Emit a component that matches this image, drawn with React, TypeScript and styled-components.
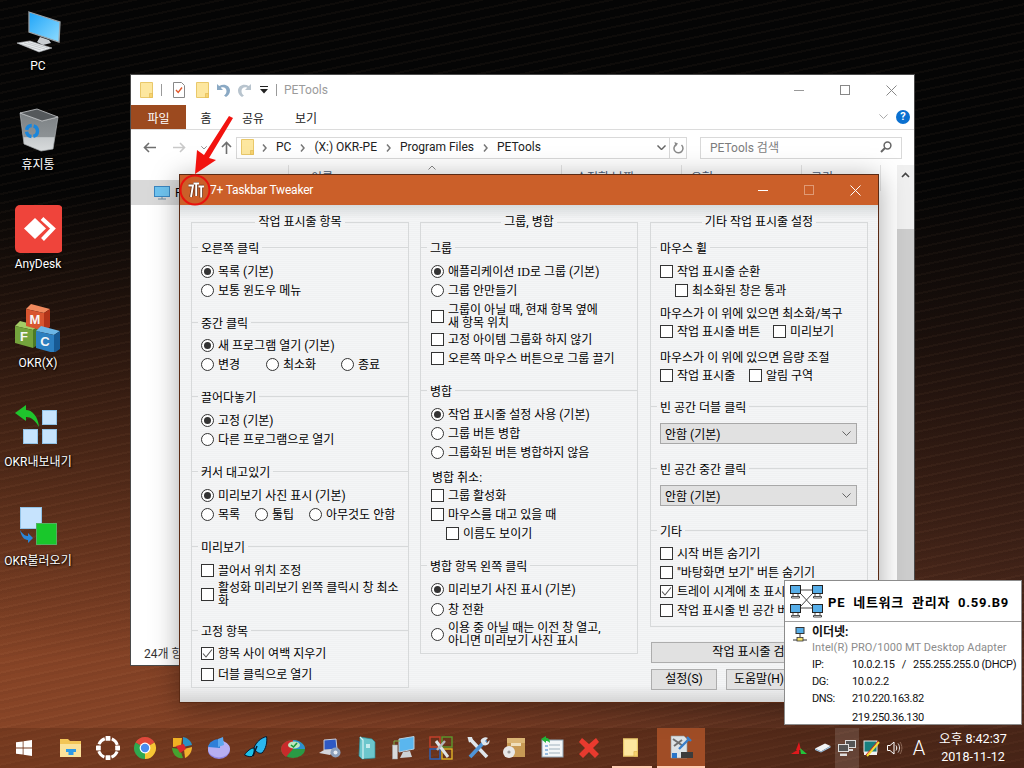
import React from "react";
import styled, { createGlobalStyle } from "styled-components";

const FONT = `Roboto, "Noto Sans CJK KR", sans-serif`;

const Global = createGlobalStyle`
  html, body { margin: 0; padding: 0; width: 1024px; height: 768px; overflow: hidden; background: #050505; }
  #root { width: 1024px; height: 768px; }
  * { box-sizing: border-box; }
`;

/* ---------- desktop ---------- */
const Desktop = styled.div`
  position: relative;
  width: 1024px;
  height: 768px;
  overflow: hidden;
  display: flex;
  flex-direction: column;
  font-family: ${FONT};
  font-size: 12px;
  color: #000;
  background:
    repeating-linear-gradient(168deg, rgba(255, 190, 140, 0.035) 0 2px, rgba(0, 0, 0, 0.03) 2px 5px, transparent 5px 9px),
    linear-gradient(180deg, #050505 0, #050505 190px, rgba(5, 5, 5, 0.75) 330px, rgba(5, 5, 5, 0) 660px),
    linear-gradient(98deg, #8a4627 0, #7b3d24 45%, #5a2f1e 80%, #4d291c 100%);
`;
const IconColumn = styled.div`
  flex: 1;
  display: flex;
  flex-direction: column;
  width: 76px;
  padding-top: 7px;
`;
const DesktopItem = styled.div`
  height: 99px;
  display: flex;
  flex-direction: column;
  align-items: center;
`;
const ItemIcon = styled.svg`
  width: 48px;
  height: 48px;
  flex: none;
`;
const ItemLabel = styled.div`
  margin-top: 3px;
  line-height: 16px;
  color: #fff;
  white-space: nowrap;
  text-shadow: 1px 1px 2px #000, 0 0 2px rgba(0, 0, 0, 0.7);
`;

/* ---------- explorer window ---------- */
const Explorer = styled.div`
  position: absolute;
  left: 130px;
  top: 74px;
  width: 785px;
  height: 592px;
  background: #fff;
  border: 1px solid #4a4a4a;
  display: flex;
  flex-direction: column;
`;
const ExTitle = styled.div`
  height: 30px;
  flex: none;
  display: flex;
  align-items: center;
  padding-left: 9px;
`;
const QuickSlot = styled.span<{ $ml?: number }>`
  display: flex;
  align-items: center;
  margin-left: ${(p) => p.$ml ?? 0}px;
`;
const QuickSep = styled.span<{ $ml: number }>`
  width: 1px;
  height: 12px;
  background: #9a9a9a;
  margin-left: ${(p) => p.$ml}px;
`;
const ExTitleText = styled.span`
  margin-left: 7px;
  color: #9b9b9b;
`;
const WinControls = styled.div`
  margin-left: auto;
  display: flex;
  height: 30px;
`;
const WinButton = styled.span`
  width: 46px;
  display: flex;
  align-items: center;
  justify-content: center;
`;
const Ribbon = styled.div`
  height: 25px;
  flex: none;
  display: flex;
  align-items: stretch;
  border-bottom: 1px solid #dcdcdc;
`;
const FileTab = styled.div`
  width: 55px;
  height: 24px;
  background: #9c4a1f;
  color: #fff;
  display: flex;
  align-items: center;
  justify-content: center;
`;
const RibbonTab = styled.div<{ $w: number }>`
  width: ${(p) => p.$w}px;
  height: 24px;
  display: flex;
  align-items: center;
  justify-content: center;
  color: #222;
`;
const RibbonRight = styled.div`
  margin-left: auto;
  display: flex;
  align-items: center;
  gap: 8px;
  padding-right: 4px;
`;
const HelpBadge = styled.span`
  width: 14px;
  height: 14px;
  border-radius: 50%;
  background: #0a70d0;
  color: #fff;
  font-size: 11px;
  font-weight: 700;
  line-height: 14px;
  text-align: center;
`;
const AddressRow = styled.div`
  height: 35px;
  flex: none;
  display: flex;
  align-items: center;
`;
const NavSlot = styled.span<{ $w: number }>`
  width: ${(p) => p.$w}px;
  display: flex;
  justify-content: center;
`;
const AddressBox = styled.div`
  width: 451px;
  height: 22px;
  border: 1px solid #d9d9d9;
  display: flex;
  align-items: center;
  padding: 0 0 2px 4px;
  color: #222;
`;
const Crumb = styled.span`
  margin-left: 9px;
  white-space: nowrap;
`;
const CrumbArrow = styled.span<{ $first?: boolean }>`
  display: flex;
  padding-top: 2px;
  margin-left: ${(p) => (p.$first ? 8 : 9)}px;
`;
const AddressEnd = styled.div`
  margin-left: auto;
  height: 20px;
  margin-top: 2px;
  display: flex;
  align-items: center;
`;
const RefreshSlot = styled.span`
  margin-left: 3px;
  width: 17px;
  height: 20px;
  border-left: 1px solid #d9d9d9;
  display: flex;
  align-items: center;
  justify-content: center;
`;
const SearchBox = styled.div`
  margin-left: 13px;
  width: 202px;
  height: 22px;
  border: 1px solid #d9d9d9;
  display: flex;
  align-items: center;
  justify-content: space-between;
  padding: 0 9px 2px 9px;
  color: #7d7d7d;
`;
const ExBody = styled.div`
  flex: 1;
  min-height: 0;
  display: flex;
`;
const ExMain = styled.div`
  flex: 1;
  min-width: 0;
  display: flex;
  flex-direction: column;
`;
const ExList = styled.div`
  flex: 1;
  display: flex;
`;
const NavPane = styled.div`
  width: 157px;
  flex: none;
  padding-top: 15px;
`;
const NavRow = styled.div`
  height: 25px;
  background: #d9d9d9;
  display: flex;
  align-items: center;
  padding-left: 23px;
  gap: 5px;
`;
const ColumnHeaders = styled.div`
  flex: 1;
  height: 26px;
  display: flex;
  position: relative;
`;
const ColumnHead = styled.div<{ $w: number; $pl: number }>`
  width: ${(p) => p.$w}px;
  border-left: 1px solid #e5e5e5;
  padding-left: ${(p) => p.$pl}px;
  line-height: 26px;
  color: #4c607a;
  &:last-of-type { border-right: 1px solid #e5e5e5; }
`;
const SortCaret = styled.svg`
  position: absolute;
  left: 140px;
  top: 0;
`;
const StatusBar = styled.div`
  height: 22px;
  flex: none;
  padding-left: 13px;
  line-height: 22px;
  color: #333;
`;
const ScrollBar = styled.div`
  width: 17px;
  flex: none;
  background: #f0f0f0;
  display: flex;
  flex-direction: column;
  margin-right: 0;
`;
const ScrollArrow = styled.div`
  height: 17px;
  display: flex;
  align-items: center;
  justify-content: center;
  margin-bottom: 46px;
  margin-top: 1px;
`;
const ScrollThumb = styled.div`
  flex: 1;
  background: #cdcdcd;
`;

/* ---------- tweaker window ---------- */
const Tweaker = styled.div`
  position: absolute;
  left: 179px;
  top: 174px;
  width: 700px;
  height: 529px;
  border: 1px solid #5a2a14;
  box-shadow: 0 4px 26px rgba(0, 0, 0, 0.35);
  display: flex;
  flex-direction: column;
`;
const TwTitle = styled.div`
  height: 30px;
  flex: none;
  background: #cb5f29;
  color: #fff;
  display: flex;
  align-items: center;
  padding-left: 8px;
`;
const TwTitleText = styled.span`
  margin-left: 6px;
  letter-spacing: -0.2px;
`;
const DimSquare = styled.span`
  width: 10px;
  height: 10px;
  border: 1px solid #e09a75;
`;
const TwBody = styled.div`
  flex: 1;
  display: flex;
  gap: 11px;
  padding: 9px 0 0 11px;
  background:
    linear-gradient(180deg, rgba(200, 205, 207, 0.65) 0, rgba(240, 240, 240, 0) 14px, rgba(240, 240, 240, 0) 480px, rgba(205, 205, 205, 0.8) 100%),
    repeating-linear-gradient(0deg, #f0f1f2 0 1px, #f4f5f6 1px 2px);
`;
const Column = styled.div<{ $ml?: number }>`
  width: 218px;
  flex: none;
  margin-left: ${(p) => p.$ml ?? 0}px;
  display: flex;
  flex-direction: column;
`;
const Panel = styled.fieldset<{ $pad: number; $pb: number }>`
  --pad: ${(p) => p.$pad}px;
  margin: 0;
  padding: 0 0 ${(p) => p.$pb}px;
  min-width: 0;
  width: 218px;
  border: 1px solid #d7d9da;
`;
const PanelTitle = styled.legend`
  margin: 0 auto;
  padding: 0 3px;
  height: 16px;
  line-height: 16px;
  white-space: nowrap;
`;
const GroupHead = styled.div<{ $mt?: number }>`
  height: 16px;
  margin-top: ${(p) => p.$mt ?? 14}px;
  display: flex;
  align-items: center;
  gap: 3px;
  white-space: nowrap;
  &::before { content: ""; width: 6px; height: 1px; background: #d7d9da; }
  &::after { content: ""; flex: 1; height: 1px; background: #d7d9da; }
`;
const Row = styled.div<{ $h?: number; $mt?: number; $ml?: number }>`
  height: ${(p) => p.$h ?? 19}px;
  margin-top: ${(p) => p.$mt ?? 0}px;
  margin-left: calc(var(--pad) + ${(p) => p.$ml ?? 0}px);
  display: flex;
  align-items: center;
  white-space: nowrap;
`;
const Option = styled.span<{ $w?: number }>`
  display: flex;
  align-items: center;
  gap: 4px;
  ${(p) => (p.$w ? `width: ${p.$w}px;` : "")}
  line-height: 13px;
`;
const OptionText = styled.span`
  padding-top: 2px;
`;
const RadioMark = styled.span<{ $on?: boolean }>`
  width: 13px;
  height: 13px;
  flex: none;
  border-radius: 50%;
  border: 1px solid #333;
  background: #fff;
  display: flex;
  align-items: center;
  justify-content: center;
  &::after {
    content: "";
    width: 7px;
    height: 7px;
    border-radius: 50%;
    background: ${(p) => (p.$on ? "#333" : "transparent")};
  }
`;
const CheckMark = styled.span`
  width: 13px;
  height: 13px;
  flex: none;
  border: 1px solid #333;
  background: #fff;
  display: flex;
  align-items: center;
  justify-content: center;
`;
const SerifBit = styled.span`
  font-family: "Liberation Serif", serif;
  font-size: 12px;
`;
const SelectBox = styled.div<{ $mt?: number }>`
  width: 197px;
  height: 21px;
  margin-top: ${(p) => p.$mt ?? 9}px;
  margin-left: var(--pad);
  background: #e1e1e1;
  border: 1px solid #a8a8a8;
  display: flex;
  align-items: center;
  justify-content: space-between;
  padding: 0 5px 0 4px;
`;
const WideButton = styled.div`
  margin: 15px 0 0 1px;
  width: 217px;
  height: 21px;
  background: #e1e1e1;
  border: 1px solid #adadad;
  line-height: 19px;
  text-align: center;
`;
const ButtonRow = styled.div`
  margin: 6px 0 0 1px;
  display: flex;
  gap: 9px;
`;
const SmallButton = styled.div`
  width: 66px;
  height: 21px;
  background: #e1e1e1;
  border: 1px solid #adadad;
  line-height: 19px;
  text-align: center;
`;

/* ---------- tooltip ---------- */
const Tip = styled.div`
  position: absolute;
  left: 784px;
  top: 580px;
  width: 238px;
  height: 145px;
  background: #fff;
  border: 1px solid #8c8c8c;
`;
const TipHead = styled.div`
  height: 41px;
  border-bottom: 1px solid #a0a0a0;
  display: flex;
  align-items: center;
  padding-left: 5px;
  gap: 5px;
`;
const TipTitle = styled.div`
  font-size: 13px;
  font-weight: 700;
  letter-spacing: 0.75px;
  word-spacing: 4px;
  white-space: nowrap;
`;
const TipBody = styled.div`
  display: flex;
  gap: 5px;
  padding: 3px 0 0 8px;
`;
const TipIconSlot = styled.span`
  flex: none;
  display: flex;
  padding-top: 2px;
`;
const TipLine = styled.div<{ $muted?: boolean; $bold?: boolean }>`
  line-height: 15px;
  white-space: pre;
  font-size: ${(p) => (p.$bold ? 12 : 11)}px;
  letter-spacing: ${(p) => (p.$bold ? 0 : 0.08)}px;
  color: ${(p) => (p.$muted ? "#8c8c8c" : "#111")};
  font-weight: ${(p) => (p.$bold ? 700 : 400)};
`;
const TipGrid = styled.div`
  margin-top: 1px;
  display: grid;
  grid-template-columns: 40px auto;
  grid-auto-rows: 17px;
  align-items: center;
  color: #111;
  font-size: 11px;
  letter-spacing: -0.35px;
  white-space: pre;
`;
const TipLast = styled.div`
  margin: 3px 0 0 40px;
  line-height: 15px;
  font-size: 11px;
  letter-spacing: -0.35px;
  color: #111;
`;

/* ---------- taskbar ---------- */
const Taskbar = styled.div`
  height: 40px;
  flex: none;
  display: flex;
  align-items: stretch;
  background: rgba(50, 20, 6, 0.2);
`;
const StartSlot = styled.div`
  width: 52px;
  padding-left: 16px;
  display: flex;
  align-items: center;
`;
const PinSlot = styled.div`
  width: 37px;
  display: flex;
  align-items: center;
  justify-content: center;
`;
const RunSlot = styled.div<{ $w: number; $on?: boolean; $pr?: number }>`
  width: ${(p) => p.$w}px;
  margin-left: 5px;
  padding-right: ${(p) => p.$pr ?? 0}px;
  display: flex;
  align-items: center;
  justify-content: center;
  background: ${(p) => (p.$on ? "#a04d26" : "transparent")};
  border-bottom: 2px solid #ffcdb4;
`;
const Tray = styled.div`
  margin-left: auto;
  display: flex;
  align-items: stretch;
  padding-right: 16px;
`;
const TraySlot = styled.div<{ $hover?: boolean }>`
  width: 24px;
  display: flex;
  align-items: center;
  justify-content: center;
  color: #fff;
  background: ${(p) => (p.$hover ? "rgba(255,255,255,.13)" : "transparent")};
`;
const TrayLetter = styled.span`
  font-size: 20px;
  font-weight: 300;
  color: #fff;
`;
const Clock = styled.div`
  width: 77px;
  padding-left: 7px;
  display: flex;
  flex-direction: column;
  justify-content: center;
  align-items: center;
  color: #fff;
  font-size: 12.6px;
  line-height: 18px;
  white-space: nowrap;
`;

/* ---------- annotation ---------- */
const Annotation = styled.svg`
  position: absolute;
  left: 170px;
  top: 105px;
  overflow: visible;
  pointer-events: none;
`;

/* ---------- small glyph helpers ---------- */
const Radio = ({ on, w, children }: { on?: boolean; w?: number; children: React.ReactNode }) => (
  <Option $w={w}>
    <RadioMark $on={on} />
    <OptionText>{children}</OptionText>
  </Option>
);
const Check = ({ on, w, children }: { on?: boolean; w?: number; children: React.ReactNode }) => (
  <Option $w={w}>
    <CheckMark>
      {on && (
        <svg width="11" height="11" viewBox="0 0 11 11">
          <path d="M1 5.5 L4 9 L10 1.5" fill="none" stroke="#555" strokeWidth="1.1" />
        </svg>
      )}
    </CheckMark>
    <OptionText>{children}</OptionText>
  </Option>
);
const Chevron = ({ color = "#666", w = 10, sw = 1 }: { color?: string; w?: number; sw?: number }) => (
  <svg width={w} height={w * 0.6} viewBox="0 0 10 6">
    <path d="M0.5 0.5 L5 5 L9.5 0.5" fill="none" stroke={color} strokeWidth={sw} />
  </svg>
);
const CrumbChevron = () => (
  <svg width="5" height="8" viewBox="0 0 5 8">
    <path d="M1 0.5 L4 4 L1 7.5" fill="none" stroke="#777" strokeWidth="1.5" />
  </svg>
);
const PaleFolder = ({ w = 13, h = 16 }: { w?: number; h?: number }) => (
  <svg width={w} height={h} viewBox="0 0 13 16">
    <path d="M0.5 0.5 H12.5 V15.5 H0.5 Z" fill="#fde79f" stroke="#e9c86a" />
    <path d="M9.5 11.5 H12.5 V15.5 H9.5 Z" fill="#f7d36f" stroke="#e2bb55" strokeWidth="0.7" />
  </svg>
);

/* ---------- desktop icons ---------- */
const IconPC = () => (
  <ItemIcon viewBox="0 0 48 48">
    <defs>
      <linearGradient id="pcs" x1="0" y1="0" x2="1" y2="1">
        <stop offset="0" stopColor="#1fa4f8" />
        <stop offset="1" stopColor="#8fdcff" />
      </linearGradient>
    </defs>
    <path d="M15 5 L46 15 L45 35 L15 25 Z" fill="url(#pcs)" stroke="#9aa2a8" strokeWidth="1.3" />
    <path d="M26 30 L35 33 L37 36 L29 38 L23 35 Z" fill="#c8ccd0" />
    <path d="M3 36 L16 34 L38 41 L25 45 Z" fill="#e9ecee" stroke="#b0b4b8" strokeWidth="0.6" />
    <path d="M6 37 L27 43 M10 36 L31 42 M14 35.5 L34 41" stroke="#a4a8ac" strokeWidth="0.5" />
  </ItemIcon>
);
const IconBin = () => (
  <ItemIcon viewBox="0 0 48 48">
    <defs>
      <linearGradient id="bin" x1="0" y1="0" x2="0" y2="1">
        <stop offset="0" stopColor="#7c8184" />
        <stop offset="0.62" stopColor="#8d9295" />
        <stop offset="0.65" stopColor="#c6cacc" />
        <stop offset="1" stopColor="#d8dbdc" />
      </linearGradient>
    </defs>
    <path d="M6 7 L28 15 L44 11 L39 43 L27 45 L10 38 Z" fill="url(#bin)" stroke="#aeb2b4" strokeWidth="0.7" />
    <path d="M6 7 L23 3 L44 11 L28 15 Z" fill="#54585b" stroke="#c6c9cb" strokeWidth="0.8" />
    <circle cx="18" cy="25" r="5.5" fill="none" stroke="#1a86dc" strokeWidth="3.4" strokeDasharray="7 2" />
  </ItemIcon>
);
const IconAny = () => (
  <ItemIcon viewBox="0 0 48 48">
    <rect x="1" y="0" width="48" height="48" rx="5" fill="#ef443b" />
    <path d="M21 13 L32 23.5 L21 34 L10 23.5 Z" fill="#fff" />
    <path d="M28 13.5 L39 23.5 L28.5 34.5" fill="none" stroke="#fff" strokeWidth="4" />
  </ItemIcon>
);
const Cube = ({ x, y, front, top, side, t }: { x: number; y: number; front: string; top: string; side: string; t: string }) => (
  <g transform={`translate(${x} ${y})`}>
    <path d="M5 0 L24 5 L18 9 L0 5 Z" fill={top} />
    <path d="M0 5 L18 9 L18 27 L0 22 Z" fill={front} />
    <path d="M18 9 L24 5 L24 23 L18 27 Z" fill={side} />
    <text x="9" y="20" textAnchor="middle" fontFamily="Liberation Sans" fontWeight="700" fontSize="13" fill="#f6f6f6">{t}</text>
  </g>
);
const IconMFC = () => (
  <ItemIcon viewBox="0 0 48 48">
    <Cube x={1} y={17} front="#74a33c" top="#a4cc66" side="#4c7a26" t="F" />
    <Cube x={12} y={0} front="#d8552f" top="#f18a5e" side="#b23418" t="M" />
    <Cube x={22} y={22} front="#2c7fc0" top="#6cb6e6" side="#175a94" t="C" />
  </ItemIcon>
);
const IconExport = () => (
  <ItemIcon viewBox="0 0 48 48">
    <g fill="#c6e3fd" stroke="#92c2e6">
      <rect x="28.5" y="7.5" width="14" height="14" />
      <rect x="9.5" y="26.5" width="14" height="14" />
      <rect x="28.5" y="26.5" width="14" height="14" />
    </g>
    <path d="M1 10 L12 2 L12 7 C18 7 24 13 25 24 C21 17 17 14 12 14 L12 18 Z" fill="#1fc42c" />
  </ItemIcon>
);
const IconImport = () => (
  <ItemIcon viewBox="0 0 48 48">
    <rect x="6.5" y="5.5" width="21" height="21" fill="#c6e3fd" stroke="#92c2e6" />
    <rect x="22.5" y="21.5" width="20" height="21" fill="#19c72b" stroke="#53b060" />
    <path d="M6 28 C9 33 12 34 14 34 L14 31 L19 36 L14 41 L14 38 C10 38 7 34 6 28 Z" fill="#2a86d8" />
  </ItemIcon>
);

/* ---------- taskbar icons ---------- */
const Tb = ({ children, s = 24 }: { children: React.ReactNode; s?: number }) => (
  <svg width={s} height={s} viewBox="0 0 24 24">{children}</svg>
);
const BarFolder = () => (
  <Tb>
    <path d="M1 3 H9 L11 5 H22 V21 H1 Z" fill="#f3c557" />
    <path d="M1 8 H22 V21 H1 Z" fill="#fbe29a" />
    <path d="M7 13 H17 V16 H14.5 V19 H9.5 V16 H7 Z" fill="#2e9ae6" />
  </Tb>
);
const BarRing = () => (
  <Tb>
    <circle cx="12" cy="12" r="9.8" fill="none" stroke="#fff" strokeWidth="3" strokeDasharray="8.2 7.2" strokeDashoffset="-3.6" />
    {[0, 90, 180, 270].map((a) => (
      <rect key={a} x="9.6" y="0" width="4.8" height="4.8" rx="0.6" fill="#fff" transform={`rotate(${a} 12 12)`} />
    ))}
  </Tb>
);
const BarChrome = () => (
  <Tb>
    <path d="M12 12 L2.47 6.5 A11 11 0 0 1 21.53 6.5 Z" fill="#e0483b" />
    <path d="M12 12 L21.53 6.5 A11 11 0 0 1 12 23 Z" fill="#f7c634" />
    <path d="M12 12 L12 23 A11 11 0 0 1 2.47 6.5 Z" fill="#2fa84f" />
    <circle cx="12" cy="12" r="5.4" fill="#fff" />
    <circle cx="12" cy="12" r="4.2" fill="#4a8cf0" />
  </Tb>
);
const BarPie = () => (
  <Tb>
    <path d="M3 2 H12 L11 10 L3 11 Z" fill="#f0b023" />
    <path d="M13 1 C18 2 21 5 22 9 L13 11 Z" fill="#2a8fc4" />
    <path d="M2 12 L10 13 L13 22 C7 23 3 19 2 12 Z" fill="#46a32f" />
    <path d="M14 13 L22 11 C22 16 19 20 15 22 Z" fill="#f2b32d" />
    <path d="M6 10 L14 8 L16 13 L10 17 Z" fill="#d9262d" />
  </Tb>
);
const BarDisc = () => (
  <Tb>
    <ellipse cx="12" cy="14" rx="11" ry="9" fill="#8f86e6" />
    <ellipse cx="12" cy="13" rx="11" ry="8.5" fill="#b6aff2" />
    <path d="M1 11 C2 6 7 3 13 3 L13 12 Z" fill="#2f7fd8" />
    <path d="M11 3 L16 1 L17 9 L11 11 Z" fill="#5aa7ee" />
  </Tb>
);
const BarFly = () => (
  <Tb>
    <path d="M10 12 C12 6 17 2 22.5 0.5 C23.5 6 22 13 18 17 C15 18 12 16 10 12 Z" fill="#2ab6ee" stroke="#06182c" strokeWidth="1" />
    <path d="M0.5 19 C3 15 7 12 10 12 C10.5 15 10 18 8 20.5 C5 21 2.5 20 0.5 19 Z" fill="#1cc2ea" stroke="#06182c" strokeWidth="1" />
    <path d="M9 20 L13 10" stroke="#06182c" strokeWidth="1.4" />
  </Tb>
);
const BarPart = () => (
  <Tb>
    <ellipse cx="12" cy="13" rx="12" ry="9" fill="#2a9a45" />
    <path d="M0 13 C0 8 5 4 12 4 L12 13 L5 21 C2 19 0 16 0 13 Z" fill="#c72b2b" />
    <path d="M12 4 C18 4 24 8 24 13 L12 13 Z" fill="#2d8fd0" />
    <ellipse cx="13" cy="9" rx="6" ry="3.6" fill="#bfe6bf" />
    <path d="M10 9 L12.5 11 L16 7" fill="none" stroke="#1a9a3a" strokeWidth="1.6" />
  </Tb>
);
const BarGear = () => (
  <Tb>
    <path d="M6 4 L18 3 L19 13 L6 14 Z" fill="#2e59c4" stroke="#c8ccd8" />
    <path d="M1 17 L6 14 L17 14 L12 19 Z" fill="#d4d6dc" />
    <circle cx="17.5" cy="16.5" r="5" fill="#8da0bc" />
    <circle cx="17.5" cy="16.5" r="2" fill="#e8edf4" />
  </Tb>
);
const BarDoc = () => (
  <Tb>
    <path d="M5 1 L17 3 L20 6 L20 22 L7 23 L4 20 Z" fill="#6cc6cc" stroke="#2e8f9a" strokeWidth="0.7" />
    <path d="M5 1 L8 4 L8 23" fill="none" stroke="#d4f1f2" strokeWidth="1.2" />
    <path d="M11 8 L15 8 L15 12 L11 12 Z" fill="#c4ecee" />
  </Tb>
);
const BarDesk = () => (
  <Tb>
    <rect x="0.5" y="9" width="5" height="14" fill="#d8dadc" stroke="#9fa3a6" strokeWidth="0.5" />
    <path d="M7 3 L22 0.5 L22 13 L7 16 Z" fill="#5ab6ee" stroke="#b8d0e0" />
    <path d="M11 16 L18 15 L20 21 L8 22 Z" fill="#cfd3d6" />
    <path d="M2 9 L2 5 L8 5" stroke="#7ab04e" strokeWidth="1" fill="none" />
  </Tb>
);
const BarGrid = () => (
  <Tb>
    <rect x="1" y="1" width="10" height="10" fill="none" stroke="#c8402c" strokeWidth="1.4" />
    <rect x="13" y="1" width="10" height="10" fill="none" stroke="#5f9a2e" strokeWidth="1.4" />
    <rect x="1" y="13" width="10" height="10" fill="none" stroke="#2a66c4" strokeWidth="1.4" />
    <rect x="13" y="13" width="10" height="10" fill="none" stroke="#e0b428" strokeWidth="1.4" />
    <path d="M7 5 L19 21" stroke="#dfe2e6" strokeWidth="3" />
    <path d="M16 5 L8 14" stroke="#b4b8bc" strokeWidth="2.4" />
  </Tb>
);
const BarTools = () => (
  <Tb>
    <path d="M4 3 L21 21" stroke="#dfe6ec" strokeWidth="3.6" />
    <path d="M20 4 L4 21" stroke="#4f94d6" strokeWidth="3.8" />
    <path d="M14.5 5 C15.5 1.5 20 0.5 22 2 L19 5 L21 7 L23.5 4 C24 8 20.5 10.5 17 9 Z" fill="#dfe6ec" />
    <path d="M1.5 1 L6 1 L7 5 L3 6.5 Z" fill="#dfe6ec" />
  </Tb>
);
const BarBox = () => (
  <Tb>
    <path d="M4 5 H22 V21 H4 Z" fill="#c89a55" />
    <path d="M4 2 H22 L22 7 H4 Z" fill="#dcb676" />
    <path d="M8 7 H18 V10 H8 Z" fill="#f0dfbc" />
    <circle cx="6" cy="16" r="6" fill="#e8e8e8" />
    <circle cx="6" cy="16" r="1.6" fill="#9a9a9a" />
  </Tb>
);
const BarList = () => (
  <Tb>
    <rect x="2" y="4" width="21" height="17" fill="#f3f6f8" stroke="#8fa4b4" />
    <path d="M9 9 H20 M9 13 H20 M9 17 H20" stroke="#9fb0bc" />
    <path d="M5 10 H8 M5 14 H8 M5 18 H8" stroke="#3a80c8" />
    <path d="M1 3 L6 0 L6 2 C9 2 10 4 10 7 C8 5 7 5 6 5 L6 7 Z" fill="#21b53a" />
  </Tb>
);
const BarX = () => (
  <Tb>
    <path d="M5 2 L12 8 L19 2 L22 6 L16 12 L22 18 L18 22 L12 16 L6 22 L2 18 L8 12 L2 6 Z" fill="#e83a2e" />
  </Tb>
);
const BarApp = () => (
  <Tb>
    <path d="M2 1 H15 L18 4 V23 H2 Z" fill="#dde3e6" stroke="#8f979c" strokeWidth="0.6" />
    <path d="M4 4 L14 11 M5 11 L13 5" stroke="#6f6f6f" strokeWidth="2" />
    <path d="M10 14 L20 4 M18 2 L22 6" stroke="#3a7fc8" strokeWidth="2.4" />
    <rect x="12" y="17" width="12" height="6" fill="#3c3c3c" />
    <rect x="3" y="18" width="5" height="5" fill="#2a76c8" />
  </Tb>
);

const Tri = () => (
  <svg width="16" height="14" viewBox="0 0 16 14">
    <path d="M0 13 L8 8 L8 13 Z" fill="#e0181c" />
    <path d="M8 1 L5 9 L10 9 Z" fill="#e0181c" />
    <path d="M9 7 L16 13 L10 13 Z" fill="#22c43a" />
  </svg>
);
const Drive = () => (
  <svg width="16" height="10" viewBox="0 0 16 10">
    <path d="M0 5.5 L10 0.5 L15.5 3 L6 8.5 Z" fill="#f2f4f6" />
    <path d="M0 5.5 L6 8.5 L15.5 3 L15.5 4.5 L6 9.5 L0 7 Z" fill="#9ec6e6" />
  </svg>
);
const NetTray = () => (
  <svg width="18" height="17" viewBox="0 0 18 17">
    <rect x="7.5" y="0.5" width="10" height="7" fill="#555" stroke="#ddd" />
    <rect x="0.5" y="4.5" width="10" height="7" fill="#555" stroke="#ddd" />
    <path d="M2 13.5 H9 V16 H2 Z" fill="#ddd" />
    <path d="M10 9 H15 V11 H10 Z" fill="#ddd" />
  </svg>
);
const MonitorTray = () => (
  <svg width="17" height="17" viewBox="0 0 17 17">
    <rect x="1" y="1" width="13" height="11" fill="#187f7f" stroke="#e8e8e8" />
    <rect x="1" y="12" width="13" height="3" fill="#f2f2f2" />
    <path d="M16 2 L4 16" stroke="#f5dc32" strokeWidth="2" />
    <path d="M15 1 L3 15" stroke="#d9261c" strokeWidth="1" />
  </svg>
);
const SpeakerTray = () => (
  <svg width="16" height="14" viewBox="0 0 16 14">
    <path d="M0.5 4.5 H3 L7 1 V13 L3 9.5 H0.5 Z" fill="none" stroke="#fff" />
    <path d="M9 4.5 C10 6 10 8 9 9.5" fill="none" stroke="#fff" />
    <path d="M11 2.5 C13 5 13 9 11 11.5" fill="none" stroke="#ddd" />
    <path d="M13 1 C15.5 4.5 15.5 9.5 13 13" fill="none" stroke="#8d6a58" />
  </svg>
);

/* ---------- tooltip icons ---------- */
const NetMon = ({ x, y }: { x: number; y: number }) => (
  <g transform={`translate(${x} ${y})`}>
    <rect x="0.5" y="0.5" width="10" height="8" fill="#57aee8" stroke="#222" />
    <path d="M3 8.5 V11 M8 8.5 V11 M1.5 11.5 H9.5 V13 H1.5 Z" fill="#fff" stroke="#222" strokeWidth="0.8" />
  </g>
);
const NetBig = () => (
  <svg width="33" height="33" viewBox="0 0 33 33">
    <path d="M11 5 H22 M11 23 H22 M11 9 L22 21 M22 9 L11 21" stroke="#333" strokeWidth="0.9" />
    <NetMon x={0} y={0} />
    <NetMon x={22} y={0} />
    <NetMon x={0} y={19} />
    <NetMon x={22} y={19} />
  </svg>
);
const NetSmall = () => (
  <svg width="14" height="15" viewBox="0 0 14 15">
    <rect x="3" y="0.5" width="8" height="6" fill="#57aee8" stroke="#333" />
    <path d="M7 6.5 V10 M0 13 H14" stroke="#333" />
    <rect x="4" y="10.5" width="6" height="3.5" fill="#f5e06a" stroke="#333" strokeWidth="0.8" />
  </svg>
);
const TweakLogo = () => (
  <svg width="16" height="16" viewBox="0 0 16 16">
    <g fill="none" stroke="#6a3014" strokeWidth="3.4">
      <path d="M0.5 3.5 H5 L3 15" />
      <path d="M5.5 1.5 H11 M8.2 1.5 V14" />
      <path d="M10.5 4.5 H16 M13.2 4.5 V15.5" />
    </g>
    <g fill="none" stroke="#fff" strokeWidth="1.9">
      <path d="M0.5 3.5 H5 L3 15" />
      <path d="M5.5 1.5 H11 M8.2 1.5 V14" />
      <path d="M10.5 4.5 H16 M13.2 4.5 V15.5" />
    </g>
  </svg>
);

export default function App() {
  return (
    <>
      <Global />
      <Desktop>
        <IconColumn>
          <DesktopItem><IconPC /><ItemLabel>PC</ItemLabel></DesktopItem>
          <DesktopItem><IconBin /><ItemLabel>휴지통</ItemLabel></DesktopItem>
          <DesktopItem><IconAny /><ItemLabel>AnyDesk</ItemLabel></DesktopItem>
          <DesktopItem><IconMFC /><ItemLabel>OKR(X)</ItemLabel></DesktopItem>
          <DesktopItem><IconExport /><ItemLabel>OKR내보내기</ItemLabel></DesktopItem>
          <DesktopItem><IconImport /><ItemLabel>OKR불러오기</ItemLabel></DesktopItem>
        </IconColumn>

        <Explorer>
          <ExTitle>
            <QuickSlot><PaleFolder /></QuickSlot>
            <QuickSep $ml={8} />
            <QuickSlot $ml={11}>
              <svg width="12" height="16" viewBox="0 0 12 16">
                <path d="M0.5 0.5 H8.5 L11.5 3.5 V15.5 H0.5 Z" fill="#fff" stroke="#888" />
                <path d="M3 8 L5.2 10.5 L9 5.5" fill="none" stroke="#e2592b" strokeWidth="1.4" />
              </svg>
            </QuickSlot>
            <QuickSlot $ml={11}><PaleFolder /></QuickSlot>
            <QuickSlot $ml={7}>
              <svg width="14" height="14" viewBox="0 0 14 14">
                <path d="M1 1 V7 H7 L4.8 4.8 C7.5 3.5 10.5 5 10.5 8 C10.5 10 9.5 11.5 8 12.5 L10 14 C12.5 12.5 14 10.5 14 7.5 C14 2.5 8 0 3.2 3 Z" fill="#8aa9c4" />
              </svg>
            </QuickSlot>
            <QuickSlot $ml={8}>
              <svg width="14" height="14" viewBox="0 0 14 14">
                <path d="M13 1 V7 H7 L9.2 4.8 C6.5 3.5 3.5 5 3.5 8 C3.5 10 4.5 11.5 6 12.5 L4 14 C1.5 12.5 0 10.5 0 7.5 C0 2.5 6 0 10.8 3 Z" fill="#b8c4ce" />
              </svg>
            </QuickSlot>
            <QuickSlot $ml={8}>
              <svg width="9" height="8" viewBox="0 0 9 8">
                <path d="M0 0 H8 V1 H0 Z M0 3 H8 L4 7.5 Z" fill="#222" />
              </svg>
            </QuickSlot>
            <QuickSep $ml={7} />
            <ExTitleText>PETools</ExTitleText>
            <WinControls>
              <WinButton>
                <svg width="10" height="10" viewBox="0 0 10 10"><path d="M0 5.5 H10" stroke="#999" /></svg>
              </WinButton>
              <WinButton>
                <svg width="10" height="10" viewBox="0 0 10 10"><rect x="0.5" y="0.5" width="9" height="9" fill="none" stroke="#888" /></svg>
              </WinButton>
              <WinButton>
                <svg width="11" height="11" viewBox="0 0 11 11"><path d="M0.5 0.5 L10.5 10.5 M10.5 0.5 L0.5 10.5" stroke="#888" /></svg>
              </WinButton>
            </WinControls>
          </ExTitle>
          <Ribbon>
            <FileTab>파일</FileTab>
            <RibbonTab $w={40}>홈</RibbonTab>
            <RibbonTab $w={54}>공유</RibbonTab>
            <RibbonTab $w={52}>보기</RibbonTab>
            <RibbonRight>
              <Chevron color="#a0a0a0" w={9} />
              <HelpBadge>?</HelpBadge>
            </RibbonRight>
          </Ribbon>
          <AddressRow>
            <NavSlot $w={36}>
              <svg width="13" height="11" viewBox="0 0 13 11"><path d="M13 5.5 H2 M6 1 L1.5 5.5 L6 10" fill="none" stroke="#6f6f6f" strokeWidth="1.6" /></svg>
            </NavSlot>
            <NavSlot $w={24}>
              <svg width="13" height="11" viewBox="0 0 13 11"><path d="M0 5.5 H11 M7 1 L11.5 5.5 L7 10" fill="none" stroke="#c9c9c9" strokeWidth="1.6" /></svg>
            </NavSlot>
            <NavSlot $w={26}><Chevron color="#888" w={6} sw={1.5} /></NavSlot>
            <NavSlot $w={19}>
              <svg width="11" height="13" viewBox="0 0 11 13"><path d="M5.5 13 V2 M1 6 L5.5 1.5 L10 6" fill="none" stroke="#6f6f6f" strokeWidth="1.6" /></svg>
            </NavSlot>
            <AddressBox>
              <PaleFolder />
              <CrumbArrow $first><CrumbChevron /></CrumbArrow>
              <Crumb>PC</Crumb>
              <CrumbArrow><CrumbChevron /></CrumbArrow>
              <Crumb>(X:) OKR-PE</Crumb>
              <CrumbArrow><CrumbChevron /></CrumbArrow>
              <Crumb>Program Files</Crumb>
              <CrumbArrow><CrumbChevron /></CrumbArrow>
              <Crumb>PETools</Crumb>
              <AddressEnd>
                <Chevron color="#666" w={9} sw={1.6} />
                <RefreshSlot>
                  <svg width="11" height="12" viewBox="0 0 11 12">
                    <path d="M8.5 3 A4.5 4.5 0 1 1 3 2.6" fill="none" stroke="#8a8a8a" strokeWidth="1.5" />
                    <path d="M1.5 0 L5 1.5 L2.5 5 Z" fill="#8a8a8a" />
                  </svg>
                </RefreshSlot>
              </AddressEnd>
            </AddressBox>
            <SearchBox>
              <span>PETools 검색</span>
              <svg width="12" height="12" viewBox="0 0 12 12">
                <circle cx="7.5" cy="4.5" r="3.4" fill="none" stroke="#666" strokeWidth="1.5" />
                <path d="M5 7 L1 11" stroke="#666" strokeWidth="2" />
              </svg>
            </SearchBox>
          </AddressRow>
          <ExBody>
            <ExMain>
              <ExList>
                <NavPane>
                  <NavRow>
                    <svg width="16" height="14" viewBox="0 0 16 14">
                      <rect x="0.5" y="0.5" width="15" height="10" fill="#6fc4f0" stroke="#3a86c0" />
                      <path d="M4 13 H12 M8 11 V13" stroke="#6a8aa0" />
                    </svg>
                    <span>PC</span>
                  </NavRow>
                </NavPane>
                <ColumnHeaders>
                  <SortCaret width="8" height="5" viewBox="0 0 8 5">
                    <path d="M0.5 4.5 L4 1 L7.5 4.5" fill="none" stroke="#888" />
                  </SortCaret>
                  <ColumnHead $w={273} $pl={22}>이름</ColumnHead>
                  <ColumnHead $w={120} $pl={14}>수정한 날짜</ColumnHead>
                  <ColumnHead $w={120} $pl={9}>유형</ColumnHead>
                  <ColumnHead $w={80} $pl={9}>크기</ColumnHead>
                </ColumnHeaders>
              </ExList>
              <StatusBar>24개 항목</StatusBar>
            </ExMain>
            <ScrollBar>
              <ScrollArrow>
                <svg width="9" height="6" viewBox="0 0 9 6"><path d="M1 5 L4.5 1.5 L8 5" fill="none" stroke="#444" strokeWidth="1.6" /></svg>
              </ScrollArrow>
              <ScrollThumb />
            </ScrollBar>
          </ExBody>
        </Explorer>

        <Tweaker>
          <TwTitle>
            <TweakLogo />
            <TwTitleText>7+ Taskbar Tweaker</TwTitleText>
            <WinControls>
              <WinButton>
                <svg width="10" height="10" viewBox="0 0 10 10"><path d="M0 5.5 H10" stroke="#fff" /></svg>
              </WinButton>
              <WinButton><DimSquare /></WinButton>
              <WinButton>
                <svg width="11" height="11" viewBox="0 0 11 11"><path d="M0.5 0.5 L10.5 10.5 M10.5 0.5 L0.5 10.5" stroke="#fff" /></svg>
              </WinButton>
            </WinControls>
          </TwTitle>
          <TwBody>
            <Column>
              <Panel $pad={9} $pb={3}>
                <PanelTitle>작업 표시줄 항목</PanelTitle>
                <GroupHead $mt={9}>오른쪽 클릭</GroupHead>
                <Row $mt={7}><Radio on>목록 (기본)</Radio></Row>
                <Row><Radio>보통 윈도우 메뉴</Radio></Row>
                <GroupHead>중간 클릭</GroupHead>
                <Row $mt={6}><Radio on>새 프로그램 열기 (기본)</Radio></Row>
                <Row>
                  <Radio w={65}>변경</Radio>
                  <Radio w={75}>최소화</Radio>
                  <Radio>종료</Radio>
                </Row>
                <GroupHead>끌어다놓기</GroupHead>
                <Row $mt={7}><Radio on>고정 (기본)</Radio></Row>
                <Row><Radio>다른 프로그램으로 열기</Radio></Row>
                <GroupHead>커서 대고있기</GroupHead>
                <Row $mt={7}><Radio on>미리보기 사진 표시 (기본)</Radio></Row>
                <Row>
                  <Radio w={54}>목록</Radio>
                  <Radio w={54}>툴팁</Radio>
                  <Radio>아무것도 안함</Radio>
                </Row>
                <GroupHead>미리보기</GroupHead>
                <Row $mt={7}><Check>끌어서 위치 조정</Check></Row>
                <Row $h={28}><Check>활성화 미리보기 왼쪽 클릭시 창 최소<br />화</Check></Row>
                <GroupHead>고정 항목</GroupHead>
                <Row $mt={6}><Check on>항목 사이 여백 지우기</Check></Row>
                <Row $mt={2}><Check>더블 클릭으로 열기</Check></Row>
              </Panel>
            </Column>

            <Column>
              <Panel $pad={10} $pb={5}>
                <PanelTitle>그룹, 병합</PanelTitle>
                <GroupHead $mt={9}>그룹</GroupHead>
                <Row $mt={7}><Radio on>애플리케이션 <SerifBit>ID</SerifBit>로 그룹 (기본)</Radio></Row>
                <Row><Radio>그룹 안만들기</Radio></Row>
                <Row $h={28} $mt={2}><Check>그룹이 아닐 때, 현재 항목 옆에<br />새 항목 위치</Check></Row>
                <Row><Check>고정 아이템 그룹화 하지 않기</Check></Row>
                <Row><Check>오른쪽 마우스 버튼으로 그룹 끌기</Check></Row>
                <GroupHead>병합</GroupHead>
                <Row $mt={7}><Radio on>작업 표시줄 설정 사용 (기본)</Radio></Row>
                <Row><Radio>그룹 버튼 병합</Radio></Row>
                <Row><Radio>그룹화된 버튼 병합하지 않음</Radio></Row>
                <Row $mt={5} $ml={1}>병합 취소:</Row>
                <Row><Check>그룹 활성화</Check></Row>
                <Row><Check>마우스를 대고 있을 때</Check></Row>
                <Row $ml={15}><Check>이름도 보이기</Check></Row>
                <GroupHead>병합 항목 왼쪽 클릭</GroupHead>
                <Row $mt={7}><Radio on>미리보기 사진 표시 (기본)</Radio></Row>
                <Row $mt={1}><Radio>창 전환</Radio></Row>
                <Row $h={28} $mt={1}><Radio>이용 중 아닐 때는 이전 창 열고,<br />아니면 미리보기 사진 표시</Radio></Row>
              </Panel>
            </Column>

            <Column $ml={1}>
              <Panel $pad={9} $pb={6}>
                <PanelTitle>기타 작업 표시줄 설정</PanelTitle>
                <GroupHead $mt={9}>마우스 휠</GroupHead>
                <Row $mt={7}><Check>작업 표시줄 순환</Check></Row>
                <Row $ml={15}><Check>최소화된 창은 통과</Check></Row>
                <Row $mt={3}>마우스가 이 위에 있으면 최소화/복구</Row>
                <Row>
                  <Check w={113}>작업 표시줄 버튼</Check>
                  <Check>미리보기</Check>
                </Row>
                <Row $mt={6}>마우스가 이 위에 있으면 음량 조절</Row>
                <Row>
                  <Check w={89}>작업 표시줄</Check>
                  <Check>알림 구역</Check>
                </Row>
                <GroupHead $mt={13}>빈 공간 더블 클릭</GroupHead>
                <SelectBox>
                  <span>안함 (기본)</span>
                  <Chevron color="#555" w={9} />
                </SelectBox>
                <GroupHead $mt={16}>빈 공간 중간 클릭</GroupHead>
                <SelectBox>
                  <span>안함 (기본)</span>
                  <Chevron color="#555" w={9} />
                </SelectBox>
                <GroupHead $mt={16}>기타</GroupHead>
                <Row $mt={6}><Check>시작 버튼 숨기기</Check></Row>
                <Row><Check>"바탕화면 보기" 버튼 숨기기</Check></Row>
                <Row><Check on>트레이 시계에 초 표시</Check></Row>
                <Row><Check>작업 표시줄 빈 공간 버</Check></Row>
              </Panel>
              <WideButton>작업 표시줄 검사기</WideButton>
              <ButtonRow>
                <SmallButton>설정(S)</SmallButton>
                <SmallButton>도움말(H)</SmallButton>
              </ButtonRow>
            </Column>
          </TwBody>
        </Tweaker>

        <Tip>
          <TipHead>
            <NetBig />
            <TipTitle>PE 네트워크 관리자 0.59.B9</TipTitle>
          </TipHead>
          <TipBody>
            <TipIconSlot><NetSmall /></TipIconSlot>
            <div>
              <TipLine $bold>이더넷:</TipLine>
              <TipLine $muted>Intel(R) PRO/1000 MT Desktop Adapter</TipLine>
              <TipGrid>
                <span>IP:</span><span>10.0.2.15   /   255.255.255.0 (DHCP)</span>
                <span>DG:</span><span>10.0.2.2</span>
                <span>DNS:</span><span>210.220.163.82</span>
              </TipGrid>
              <TipLast>219.250.36.130</TipLast>
            </div>
          </TipBody>
        </Tip>

        <Taskbar>
          <StartSlot>
            <svg width="16" height="16" viewBox="0 0 16 16">
              <path d="M0 2.3 L6.7 1.4 V7.6 H0 Z M7.5 1.3 L16 0 V7.6 H7.5 Z M0 8.4 H6.7 V14.6 L0 13.7 Z M7.5 8.4 H16 V16 L7.5 14.7 Z" fill="#fff" />
            </svg>
          </StartSlot>
          <PinSlot><BarFolder /></PinSlot>
          <PinSlot><BarRing /></PinSlot>
          <PinSlot><BarChrome /></PinSlot>
          <PinSlot><BarPie /></PinSlot>
          <PinSlot><BarDisc /></PinSlot>
          <PinSlot><BarFly /></PinSlot>
          <PinSlot><BarPart /></PinSlot>
          <PinSlot><BarGear /></PinSlot>
          <PinSlot><BarDoc /></PinSlot>
          <PinSlot><BarDesk /></PinSlot>
          <PinSlot><BarGrid /></PinSlot>
          <PinSlot><BarTools /></PinSlot>
          <PinSlot><BarBox /></PinSlot>
          <PinSlot><BarList /></PinSlot>
          <PinSlot><BarX /></PinSlot>
          <RunSlot $w={40} $pr={4}><PaleFolder w={15} h={19} /></RunSlot>
          <RunSlot $w={48} $on><BarApp /></RunSlot>
          <Tray>
            <TraySlot><Tri /></TraySlot>
            <TraySlot><Drive /></TraySlot>
            <TraySlot $hover><NetTray /></TraySlot>
            <TraySlot><MonitorTray /></TraySlot>
            <TraySlot><SpeakerTray /></TraySlot>
            <TraySlot><TrayLetter>A</TrayLetter></TraySlot>
            <Clock>
              <span>오후 8:42:37</span>
              <span>2018-11-12</span>
            </Clock>
          </Tray>
        </Taskbar>

        <Annotation width="70" height="115" viewBox="0 0 70 115">
          <path d="M25 69 L27 45 L34 50 L59 11 L63 13 L39 53 L46 55 Z" fill="#f2130f" />
          <circle cx="25" cy="85" r="14.5" fill="none" stroke="#e8120e" strokeWidth="2" />
        </Annotation>
      </Desktop>
    </>
  );
}
